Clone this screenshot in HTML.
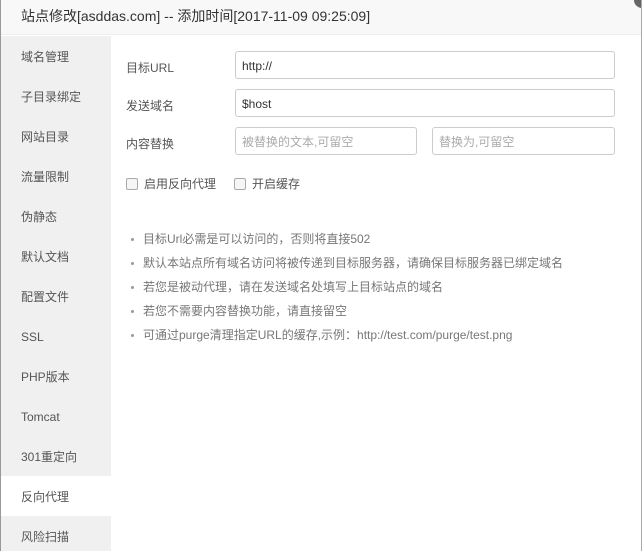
<!DOCTYPE html>
<html><head><meta charset="utf-8"><style>
*{margin:0;padding:0;box-sizing:border-box}
body{width:642px;height:551px;overflow:hidden;background:#fff;font-family:"Liberation Sans","Noto Sans CJK SC",sans-serif;color:#333;font-size:12px;position:relative}
.frame{position:absolute;left:0;top:0;width:642px;height:551px;border-left:1px solid #999;border-right:1px solid #aaa}
.title{position:absolute;left:1px;top:0;width:640px;height:35px;background:#f8f8f8;border-bottom:1px solid #eee;font-size:14px;line-height:33px;padding-left:20px;color:#333}
.close{position:absolute;right:-8px;top:-8px;width:16px;height:16px;border-radius:50%;background:#666}
.side{position:absolute;left:1px;top:36px;width:110px;height:515px;background:#f0f0f0}
.side div{height:40px;line-height:42px;padding-left:20px;color:#555}
.side div.on{background:#fff}
.lab{position:absolute;left:126px;color:#555}
.inp{position:absolute;border:1px solid #ccc;border-radius:3px;height:28px;line-height:28px;padding-left:6px;color:#333}
.ph{color:#aaa}
.cb{position:absolute;top:175px;display:flex;align-items:center;color:#555}
.cb i{display:inline-block;width:12px;height:12px;border:1px solid #aaa;border-radius:2px;background:#f5f5f5;margin-right:6px}
ul{position:absolute;left:131px;top:230px;list-style:none;color:#777}
li{height:24px;line-height:18px;position:relative;padding-left:12px}
li:before{content:"";position:absolute;left:0;top:8px;width:3px;height:3px;border-radius:50%;background:#999}
</style></head><body>
<div class="title">站点修改[asddas.com] -- 添加时间[2017-11-09 09:25:09]</div>
<div class="close"></div>
<div class="side">
<div>域名管理</div><div>子目录绑定</div><div>网站目录</div><div>流量限制</div><div>伪静态</div><div>默认文档</div><div>配置文件</div><div>SSL</div><div>PHP版本</div><div>Tomcat</div><div>301重定向</div><div class="on">反向代理</div><div>风险扫描</div>
</div>
<div class="lab" style="top:59px">目标URL</div>
<div class="inp" style="left:235px;top:51px;width:380px">http://</div>
<div class="lab" style="top:97px">发送域名</div>
<div class="inp" style="left:235px;top:89px;width:380px">$host</div>
<div class="lab" style="top:135px">内容替换</div>
<div class="inp ph" style="left:235px;top:127px;width:182px">被替换的文本,可留空</div>
<div class="inp ph" style="left:432px;top:127px;width:183px">替换为,可留空</div>
<div class="cb" style="left:126px"><i></i>启用反向代理</div>
<div class="cb" style="left:234px"><i></i>开启缓存</div>
<ul>
<li>目标Url必需是可以访问的，否则将直接502</li>
<li>默认本站点所有域名访问将被传递到目标服务器，请确保目标服务器已绑定域名</li>
<li>若您是被动代理，请在发送域名处填写上目标站点的域名</li>
<li>若您不需要内容替换功能，请直接留空</li>
<li>可通过purge清理指定URL的缓存,示例：http://test.com/purge/test.png</li>
</ul>
<div class="frame"></div>
</body></html>
